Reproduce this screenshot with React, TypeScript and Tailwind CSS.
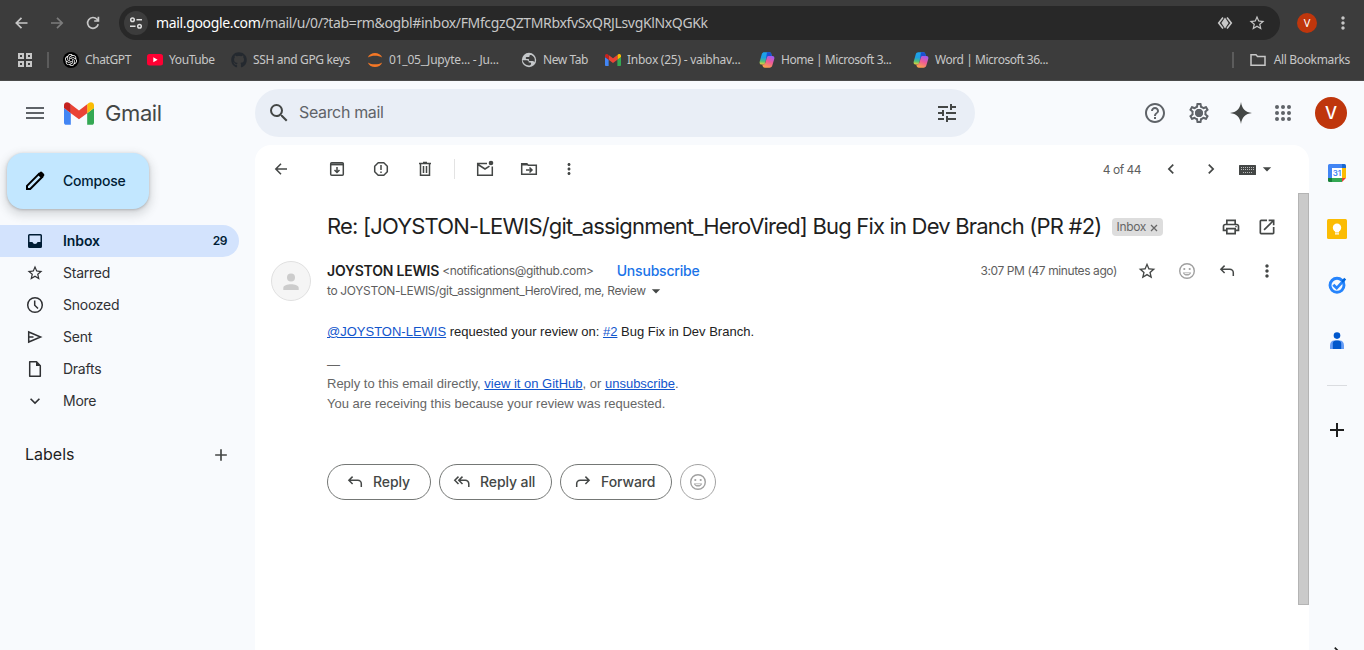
import React from "react";
import {
  MdAdd,
  MdArrowDropDown,
  MdChevronLeft,
  MdChevronRight,
  MdHelpOutline,
  MdKeyboardArrowDown,
  MdMenu,
  MdMoreVert,
  MdOpenInNew,
  MdOutlinePrint,
  MdOutlineSettings,
  MdSearch,
  MdStarBorder,
  MdTune,
} from "react-icons/md";
import { FaGithub } from "react-icons/fa";
import { SiOpenai } from "react-icons/si";

type SvgProps = { className?: string; children: React.ReactNode; box?: string };

function Stroke({ className = "", children, box = "0 0 20 20" }: SvgProps) {
  return (
    <svg
      viewBox={box}
      className={`shrink-0 ${className}`}
      fill="none"
      stroke="currentColor"
      strokeWidth="1.5"
    >
      {children}
    </svg>
  );
}

function GmailMark({ className = "" }: { className?: string }) {
  return (
    <svg viewBox="52 42 88 66" className={`shrink-0 ${className}`}>
      <path fill="#4285f4" d="M58 108h14V74L52 59v43c0 3.32 2.69 6 6 6" />
      <path fill="#34a853" d="M120 108h14c3.32 0 6-2.69 6-6V59l-20 15" />
      <path fill="#fbbc04" d="M120 48v26l20-15v-8c0-7.42-8.47-11.65-14.4-7.2" />
      <path fill="#ea4335" d="M72 74V48l24 18 24-18v26L96 92" />
      <path fill="#c5221f" d="M52 51v8l20 15V48l-5.6-4.2c-5.94-4.45-14.4-.22-14.4 7.2" />
    </svg>
  );
}

function CopilotMark({ id }: { id: string }) {
  return (
    <svg viewBox="-0.3 -0.3 16.600 16.600" className="size-4 shrink-0">
      <defs>
        <linearGradient id={`${id}a`} x1="0.5" y1="0" x2="0.4" y2="1">
          <stop offset="0" stopColor="#1ba4f0" />
          <stop offset="0.45" stopColor="#1f9ee0" />
          <stop offset="0.75" stopColor="#4fbf7a" />
          <stop offset="1" stopColor="#e3d03a" />
        </linearGradient>
        <linearGradient id={`${id}b`} x1="0.8" y1="0" x2="0.4" y2="1">
          <stop offset="0" stopColor="#9a5cf5" />
          <stop offset="0.5" stopColor="#ee5a97" />
          <stop offset="1" stopColor="#fba04e" />
        </linearGradient>
      </defs>
      <path
        fill={`url(#${id}a)`}
        d="M5.300 0h5.100c1 0 1.700.6 2 1.500L13 4H9.600c-.9 0-1.500.5-1.800 1.400L6 11.400c-.3.900-.9 1.300-1.800 1.300H2.400C.8 12.700 0 11.400.4 9.800L2.500 2.200C2.900.8 3.900 0 5.300 0z"
      />
      <path fill="#1d4fd0" d="M8 0h2.600c.9 0 1.500.6 1.800 1.500L13 4H9.600c-.9 0-1.500.5-1.800 1.400L6.500 9.500z" />
      <path
        fill={`url(#${id}b)`}
        d="M10.700 16H5.600c-1 0-1.700-.6-2-1.500L3 12.600h1.400c.9 0 1.500-.5 1.800-1.400L8 5.200c.3-.9.9-1.300 1.800-1.300h3.800c1.600 0 2.400 1.300 2 2.900l-2.100 7C13.100 15.200 12.100 16 10.700 16z"
      />
    </svg>
  );
}

function Smile({ className = "" }: { className?: string }) {
  return (
    <Stroke className={className}>
      <circle cx="10" cy="10" r="7.300" strokeWidth="1.400" />
      <circle cx="7.300" cy="8" r="1.100" fill="currentColor" stroke="none" />
      <circle cx="12.700" cy="8" r="1.100" fill="currentColor" stroke="none" />
      <path d="M5.800 11.500h8.400a4.400 4.400 0 0 1-8.400 0z" fill="currentColor" stroke="none" />
      <path d="M7.600 12.600h4.800" stroke="#fff" strokeWidth="0.900" />
    </Stroke>
  );
}

function ReplyArrow({ className = "" }: { className?: string }) {
  return (
    <Stroke className={className}>
      <path d="M7.600 4.600 3.900 8.300l3.700 3.700M4.200 8.300h8.600a3.500 3.500 0 0 1 3.500 3.500V15" />
    </Stroke>
  );
}

function Cell({ className = "", children }: { className?: string; children: React.ReactNode }) {
  return <div className={`flex shrink-0 items-center justify-center ${className}`}>{children}</div>;
}

function BrowserBar() {
  return (
    <header className="h-[81px] shrink-0 border-b border-[#4a4a4a] bg-[#3c3c3c] font-['Noto_Sans',sans-serif] text-[#c7c7c7]">
      <div className="flex h-[46px] items-center pl-1">
        <Cell className="w-[35px]">
          <Stroke className="size-4 text-[#c7c7c7]" box="0 0 16 16">
            <path d="M13.500 8H2.500M7.500 2.800 2.300 8l5.200 5.200" strokeWidth="1.700" />
          </Stroke>
        </Cell>
        <Cell className="w-[36px]">
          <Stroke className="size-4 text-[#7c7c7c]" box="0 0 16 16">
            <path d="M2 8h11M8 2.800 13.200 8 8 13.200" strokeWidth="1.700" />
          </Stroke>
        </Cell>
        <Cell className="w-[36px]">
          <Stroke className="size-4 text-[#c7c7c7]" box="0 0 16 16">
            <path d="M13.200 9.300A5.400 5.400 0 1 1 12 4.300L13.300 6M13.400 1.800V6H9.200" strokeWidth="1.700" />
          </Stroke>
        </Cell>
        <div className="ml-2 flex h-[34px] w-[1161px] items-center rounded-full bg-[#282828] pl-[5px] pr-[14px]">
          <Cell className="size-6 rounded-full bg-[#3c3c3c]">
            <Stroke className="size-4 text-[#dedede]" box="0 0 16 16">
              <circle cx="4.500" cy="4.800" r="1.800" />
              <path d="M8.500 4.800H14M2 11.200h5.500" />
              <circle cx="11.500" cy="11.200" r="1.800" />
            </Stroke>
          </Cell>
          <div className="ml-2 whitespace-nowrap text-sm leading-5 tracking-[-0.35px]">
            <span className="text-white">mail.google.com</span>
            <span>/mail/u/0/?tab=rm&amp;ogbl#inbox/FMfcgzQZTMRbxfvSxQRJLsvgKlNxQGKk</span>
          </div>
          <svg viewBox="0 0 16 16" className="ml-auto size-4">
            <path
              d="M6 2.500 1.700 8 6 13.500M10 2.500 14.300 8 10 13.500"
              fill="none"
              stroke="currentColor"
              strokeWidth="1.600"
            />
            <path d="M8 2.500 11.600 8 8 13.500 4.400 8z" fill="currentColor" />
          </svg>
          <MdStarBorder className="ml-[15px] size-[18px]" />
        </div>
        <Cell className="ml-[17px] size-5 rounded-full bg-[#bf360c] text-[11px] text-white">V</Cell>
        <MdMoreVert className="ml-4 size-5" />
      </div>
      <nav className="flex h-7 items-center whitespace-nowrap text-xs tracking-[-0.3px]">
        <Stroke className="ml-[17px] size-4 text-[#c7c7c7]" box="0 0 16 16">
          <path d="M2 2h4v4H2zM10 2h4v4h-4zM2 10h4v4H2zM10 10h4v4h-4z" strokeWidth="2" />
        </Stroke>
        <span className="ml-[14px] h-4 w-0.5 bg-[#5c5c5c]" />
        <span className="ml-[14px] flex w-[84px] items-center">
          <span className="flex size-4 shrink-0 items-center justify-center rounded-full bg-black">
            <SiOpenai className="size-3 text-white" />
          </span>
          <span className="ml-1.5 tracking-[-0.4px]">ChatGPT</span>
        </span>
        <span className="flex w-[84px] items-center">
          <svg viewBox="0 0 16 12" className="h-3 w-4 shrink-0">
            <rect width="16" height="11.500" rx="2.500" fill="#ff0033" />
            <path d="M6.300 3.300v5l4.300-2.500z" fill="#fff" />
          </svg>
          <span className="ml-1.5 tracking-[-0.4px]">YouTube</span>
        </span>
        <span className="flex w-[136px] items-center">
          <FaGithub className="size-4 shrink-0 text-[#24292f]" />
          <span className="ml-1.5 tracking-[-0.35px]">SSH and GPG keys</span>
        </span>
        <span className="flex w-[154px] items-center">
          <svg viewBox="0 0 16 16" className="size-4 shrink-0">
            <path d="M.8 5.600C3-.6 13-.6 15.200 5.600 11.500 3 4.500 3 .8 5.600z" fill="#f37726" />
            <path d="M.8 10.400C3 16.600 13 16.600 15.200 10.400 11.500 13 4.500 13 .8 10.400z" fill="#f37726" />
          </svg>
          <span className="ml-1.5 tracking-[-0.2px]">01_05_Jupyte... - Ju...</span>
        </span>
        <span className="flex w-[84px] items-center">
          <svg viewBox="0 0 16 16" className="size-4 shrink-0">
            <circle cx="8" cy="8" r="7.200" fill="#c4c7c9" />
            <path
              d="M1.500 8.300h4.300c1.300 0 1.900.8 1.900 1.800v.5h1.200c.8 0 1.200.5 1.200 1.200 0 .9-.6 1.400-1.700 1.600-3.500.2-6-2-6.900-5.100zM10.800 3.200c1.900 1 3 2.800 3 4.800 0 .8-.2 1.500-.5 2.200-.4-.8-.9-1.200-1.700-1.200H8.900c-.6 0-1-.4-1-1V7H5.600c-.5 0-.9-.4-.9-.9 0-.7.5-1.200 1.200-1.200h2.500V4.300c0-.8.600-1.300 1.400-1.300z"
              fill="#3c3c3c"
            />
          </svg>
          <span className="ml-1.5 tracking-[-0.45px]">New Tab</span>
        </span>
        <span className="flex w-[154px] items-center">
          <GmailMark className="h-3 w-4" />
          <span className="ml-1.5 tracking-[-0.25px]">Inbox (25) - vaibhav...</span>
        </span>
        <span className="flex w-[154px] items-center">
          <CopilotMark id="home" />
          <span className="ml-1.5 tracking-[-0.45px]">Home | Microsoft 3...</span>
        </span>
        <span className="flex items-center">
          <CopilotMark id="word" />
          <span className="ml-1.5 tracking-[-0.45px]">Word | Microsoft 36...</span>
        </span>
        <span className="ml-auto mr-4 h-4 w-0.5 bg-[#5c5c5c]" />
        <Stroke className="size-4" box="0 0 16 16">
          <path d="M1 13.200V2.800h5l1.500 1.700H15v8.700z" />
        </Stroke>
        <span className="ml-2 mr-[14px] tracking-[-0.35px]">All Bookmarks</span>
      </nav>
    </header>
  );
}

const folders: { name: string; icon: React.ReactNode; count?: string; active?: boolean }[] = [
  {
    name: "Inbox",
    icon: (
      <svg viewBox="0 0 20 20" className="size-5">
        <path
          fillRule="evenodd"
          fill="currentColor"
          d="M4.500 3h11A1.500 1.500 0 0 1 17 4.500v11a1.500 1.500 0 0 1-1.500 1.500h-11A1.500 1.500 0 0 1 3 15.500v-11A1.500 1.500 0 0 1 4.500 3zm0 1.500V11h3c.3 1.200 1.300 2 2.500 2s2.200-.8 2.500-2h3V4.500z"
        />
      </svg>
    ),
    count: "29",
    active: true,
  },
  { name: "Starred", icon: <MdStarBorder className="size-[18px]" /> },
  {
    name: "Snoozed",
    icon: (
      <Stroke className="size-5">
        <circle cx="10" cy="10" r="7.300" />
        <path d="M9.700 5.500v4.800l3.300 3.200" />
      </Stroke>
    ),
  },
  {
    name: "Sent",
    icon: (
      <Stroke className="size-5">
        <path d="M3.700 5v10L15.600 10zM4 10h4.500" />
      </Stroke>
    ),
  },
  {
    name: "Drafts",
    icon: (
      <Stroke className="size-5">
        <path d="M4.700 2.700h6.800l3.800 4v10.600H4.700z" strokeLinejoin="round" />
        <path d="M11 2.500v4.500h4.500z" fill="currentColor" stroke="none" />
      </Stroke>
    ),
  },
  { name: "More", icon: <MdKeyboardArrowDown className="size-5" /> },
];

function Sidebar() {
  return (
    <aside className="flex w-[255px] shrink-0 flex-col">
      <div className="flex h-16 items-center pl-[23px]">
        <MdMenu className="size-6 text-[#5f6368]" />
        <GmailMark className="ml-[17px] h-[23px] w-[30px]" />
        <span className="ml-[11px] text-[22px] tracking-[-0.4px] text-[#444746]">Gmail</span>
      </div>
      <button className="ml-[7px] mt-2 flex h-14 w-[142px] items-center rounded-2xl bg-[#c2e7ff] pl-4 text-[#001d35] shadow-[0_1px_3px_rgba(60,64,67,0.3),0_4px_8px_3px_rgba(60,64,67,0.15)]">
        <svg viewBox="0 0 24 24" className="size-6 text-black">
          <path
            d="M4 20v-3.200L16 4.800l3.200 3.200L7.200 20z"
            fill="none"
            stroke="currentColor"
            strokeWidth="2"
          />
          <path d="m14.500 5.500 2.300-2.300a1.800 1.800 0 0 1 2.500 0l1.500 1.500c.7.700.7 1.800 0 2.500l-2.300 2.300z" fill="currentColor" />
        </svg>
        <span className="ml-4 text-sm font-medium tracking-[-0.2px]">Compose</span>
      </button>
      <ul className="mt-4">
        {folders.map((f) => (
          <li
            key={f.name}
            className={`mr-4 flex h-8 items-center rounded-r-full pl-[25px] pr-3 text-sm ${
              f.active ? "bg-[#d3e3fd] font-semibold text-[#001d35]" : "text-[#303134]"
            }`}
          >
            <Cell className="size-5">{f.icon}</Cell>
            <span className={`ml-[18px] ${f.active ? "tracking-[-0.1px]" : "tracking-[-0.25px]"}`}>{f.name}</span>
            {f.count && <span className="ml-auto text-xs tracking-[-0.5px]">{f.count}</span>}
          </li>
        ))}
      </ul>
      <div className="mt-[27px] flex h-[22px] items-center justify-between pl-[25px] pr-6">
        <h2 className="pb-0.5 text-base text-[#1f1f1f]">Labels</h2>
        <MdAdd className="size-5 text-[#444746]" />
      </div>
    </aside>
  );
}

function TopBar() {
  return (
    <div className="flex h-16 shrink-0 items-center">
      <div className="flex h-12 w-[720px] items-center rounded-full bg-[#e9eef6] pl-3 pr-4">
        <MdSearch className="size-6 text-[#444746]" />
        <span className="ml-2 pb-0.5 text-base tracking-[-0.35px] text-[#5f6368]">Search mail</span>
        <MdTune className="ml-auto size-6 text-[#444746]" />
      </div>
      <MdHelpOutline className="ml-[168px] size-6 text-[#5f6368]" />
      <Cell className="ml-5 size-6 text-[#5f6368]">
        <svg viewBox="0 0 24 24" className="size-6">
          <circle cx="12" cy="12" r="3.900" fill="currentColor" />
          <foreignObject width="24" height="24">
            <MdOutlineSettings className="size-6" />
          </foreignObject>
        </svg>
      </Cell>
      <svg viewBox="0 0 24 24" className="ml-[18px] size-6 text-[#444746]">
        <path d="M12 1c.7 6.500 4.500 10.300 11 11-6.500.7-10.300 4.500-11 11-.7-6.500-4.500-10.300-11-11C7.500 11.300 11.300 7.500 12 1z" fill="currentColor" />
      </svg>
      <svg viewBox="0 0 24 24" className="ml-[18px] size-6 text-[#5f6368]" fill="currentColor">
        {[6, 12, 18].map((y) => [6, 12, 18].map((x) => <circle key={`${x}-${y}`} cx={x} cy={y} r="2" />))}
      </svg>
      <Cell className="ml-5 size-8 rounded-full bg-[#bf360c] pt-px text-[17px] font-medium text-white">V</Cell>
    </div>
  );
}

function MailToolbar() {
  return (
    <div className="flex h-12 items-center pl-1.5 text-[#444746]">
      <Cell className="w-10">
        <Stroke className="size-5">
          <path d="M16 10H5.300M10 4.700 4.800 10l5.200 5.300" />
        </Stroke>
      </Cell>
      <Cell className="ml-[14px] w-11">
        <Stroke className="size-5">
          <rect x="3.700" y="3.700" width="12.600" height="12.600" rx="1" />
          <path d="M3.500 5.400h13" strokeWidth="2" />
          <path d="M10 8v5.500M7.500 11l2.500 2.500 2.500-2.500" />
        </Stroke>
      </Cell>
      <Cell className="w-11">
        <Stroke className="size-5">
          <path d="M7.200 3.700h5.600l3.500 3.500v5.600l-3.500 3.500H7.200l-3.500-3.500V7.200z" strokeLinejoin="round" />
          <path d="M10 6v5M10 12.500V14" />
        </Stroke>
      </Cell>
      <Cell className="w-11">
        <Stroke className="size-5">
          <path d="M5.500 5v11.300h9V5M4 4.500h12M8 3.500h4M8.500 7v7M11.500 7v7" />
        </Stroke>
      </Cell>
      <span className="ml-[7px] h-5 w-px bg-[#e3e3e3]" />
      <Cell className="ml-2 w-11">
        <Stroke className="size-5">
          <path d="M12 4.500H2.700v11.800h14.600V7.500M3 5.500l7 4.500 4.500-2.800" />
          <circle cx="16" cy="4" r="2.300" fill="currentColor" stroke="none" />
        </Stroke>
      </Cell>
      <Cell className="w-11">
        <Stroke className="size-5">
          <path d="M2.700 15.300V4.700h5l1.600 1.600h8v9z" />
          <path d="M2.500 5.500h6" strokeWidth="2" />
          <path d="M7 11h5.500M10.500 8.500l2.500 2.500-2.500 2.500" />
        </Stroke>
      </Cell>
      <Cell className="w-9">
        <MdMoreVert className="size-[18px]" />
      </Cell>
      <span className="ml-auto pt-0.5 text-xs tracking-[-0.5px] text-[#5e5e5e]">4 of 44</span>
      <MdChevronLeft className="ml-5 size-5" />
      <MdChevronRight className="ml-5 size-5" />
      <svg viewBox="0 0 18 12" className="ml-[18px] mt-0.5 h-3 w-[18px] text-[#444746]">
        <rect width="17" height="10" y="1" rx="0.500" fill="currentColor" />
        <path d="M2 3.500h14M2 5.500h14M4 8.500h10" stroke="#b9b9b9" strokeWidth="1" strokeDasharray="1 1" />
      </svg>
      <MdArrowDropDown className="mr-8 size-5" />
    </div>
  );
}

const pill = "flex h-9 items-center rounded-full border border-[#747775] text-sm font-medium tracking-[-0.1px] text-[#444746]";

function Message() {
  return (
    <article className="min-w-0 flex-1">
      <div className="flex h-[68px] items-center pl-[72px]">
        <h1 className="whitespace-nowrap pb-px text-[22px] tracking-[-0.81px] text-[#1f1f1f]">
          Re: [JOYSTON-LEWIS/git_assignment_HeroVired] Bug Fix in Dev Branch (PR #2)
        </h1>
        <span className="ml-[11px] flex h-[18px] w-[51px] items-center rounded bg-[#ddd] pl-1 text-xs tracking-[-0.3px] text-[#666]">
          Inbox
          <svg viewBox="0 0 8 8" className="ml-1 mt-px size-2">
            <path d="m1 1 6 6M7 1 1 7" stroke="#666" strokeWidth="1.300" />
          </svg>
        </span>
        <MdOutlinePrint className="ml-auto size-5 text-[#444746]" />
        <MdOpenInNew className="ml-4 mr-[21px] size-5 text-[#444746]" />
      </div>
      <div className="flex h-10 pl-4">
        <svg viewBox="0 0 40 40" className="size-10 shrink-0">
          <circle cx="20" cy="20" r="19.500" fill="#f5f5f5" stroke="#e0e0e0" />
          <circle cx="20" cy="16.500" r="4" fill="#ccc" />
          <path d="M12.300 29v-2c0-5 15.400-5 15.400 0v2z" fill="#ccc" />
        </svg>
        <div className="ml-4 min-w-0 whitespace-nowrap">
          <div className="flex h-5 items-center">
            <span className="text-sm font-semibold tracking-[-0.2px] text-[#1f1f1f]">JOYSTON LEWIS</span>
            <span className="ml-[3px] text-xs tracking-[-0.36px] text-[#5e5e5e]">&lt;notifications@github.com&gt;</span>
            <span className="ml-[23px] text-sm font-medium tracking-[-0.2px] text-[#1a73e8]">Unsubscribe</span>
          </div>
          <div className="flex h-5 items-center text-xs tracking-[-0.35px] text-[#5e5e5e]">
            to JOYSTON-LEWIS/git_assignment_HeroVired, me, Review
            <MdArrowDropDown className="size-5 text-[#444746]" />
          </div>
        </div>
        <div className="ml-auto flex h-5 shrink-0 items-center pr-[21px] text-[#444746]">
          <span className="whitespace-nowrap text-xs tracking-[-0.4px] text-[#5e5e5e]">
            3:07 PM (47 minutes ago)
          </span>
          <MdStarBorder className="ml-5 size-5" />
          <Smile className="ml-5 size-5 text-[#a0a0a0]" />
          <ReplyArrow className="ml-5 size-5" />
          <MdMoreVert className="ml-5 size-5" />
        </div>
      </div>
      <div className="pl-[72px] font-['Liberation_Sans',Arial,sans-serif] text-[13px] leading-5 text-[#666]">
        <p className="mt-[21px] text-[#222]">
          <a className="text-[#1155cc] underline">@JOYSTON-LEWIS</a> requested your review on:{" "}
          <a className="text-[#1155cc] underline">#2</a> Bug Fix in Dev Branch.
        </p>
        <p className="mt-[13px]">—</p>
        <p className="-mt-px">
          Reply to this email directly, <a className="text-[#1155cc] underline">view it on GitHub</a>, or{" "}
          <a className="text-[#1155cc] underline">unsubscribe</a>.
        </p>
        <p>You are receiving this because your review was requested.</p>
      </div>
      <div className="mt-[50px] flex gap-2 pl-[72px]">
        <button className={`${pill} w-[104px] pl-[17px]`}>
          <ReplyArrow className="size-5" />
          <span className="ml-2">Reply</span>
        </button>
        <button className={`${pill} w-[113px] pl-3`}>
          <Stroke className="size-5">
            <path d="M6.500 4.600 2.800 8.300l3.700 3.700M10.500 4.600 6.800 8.300l3.700 3.700M7.100 8.300h6.200a3.500 3.500 0 0 1 3.500 3.500V15" />
          </Stroke>
          <span className="ml-2">Reply all</span>
        </button>
        <button className={`${pill} w-[112px] pl-3`}>
          <ReplyArrow className="size-5 -scale-x-100" />
          <span className="ml-2">Forward</span>
        </button>
        <span className="flex size-9 items-center justify-center rounded-full border border-[#a3a3a3]">
          <Smile className="size-5 text-[#a0a0a0]" />
        </span>
      </div>
    </article>
  );
}

function AddOns() {
  return (
    <aside className="flex w-[55px] shrink-0 flex-col items-center overflow-hidden pt-[18px]">
      <svg viewBox="0 0 20 20" className="size-5 shrink-0">
        <path d="M1 2.500A1.500 1.500 0 0 1 2.500 1H15v4H5v10H1z" fill="#4285f4" />
        <path d="M15 1h2.500A1.500 1.500 0 0 1 19 2.500V5h-4z" fill="#1967d2" />
        <path d="M15 5h4v10h-4z" fill="#fbbc04" />
        <path d="M5 15h10v4H5z" fill="#34a853" />
        <path d="M1 15h4v4H2.500A1.500 1.500 0 0 1 1 17.500z" fill="#188038" />
        <path d="M15 15h4l-4 4z" fill="#ea4335" />
        <path d="M5 5h10v10H5z" fill="#fff" />
        <text
          x="10"
          y="13"
          textAnchor="middle"
          fontSize="8"
          fontWeight="600"
          fill="#4285f4"
        >
          31
        </text>
      </svg>
      <svg viewBox="0 0 20 20" className="mt-9 size-5 shrink-0">
        <rect width="20" height="20" rx="1.500" fill="#fbbc04" />
        <circle cx="10" cy="8.800" r="4.200" fill="#fff" />
        <path d="M8 11.500h4v2H8zM8 14.300h4v1.200H8z" fill="#fff" />
      </svg>
      <svg viewBox="0 0 20 20" className="mt-9 size-5 shrink-0">
        <circle cx="10" cy="10.300" r="7" fill="none" stroke="#2684fc" strokeWidth="2.900" />
        <path d="m6.300 9.700 3.400 3.400 7.600-8.200" fill="none" stroke="#2684fc" strokeWidth="2.800" />
        <path d="m14.500 6 2.700-3.300 2 1.800-3.400 3.600z" fill="#0066da" />
      </svg>
      <svg viewBox="0 0 20 20" className="mt-9 size-5 shrink-0">
        <circle cx="10" cy="4.600" r="3.300" fill="#0057cc" />
        <path d="M3 18v-3.500C3 11.300 5 9.500 7 9.500h6c2 0 4 1.800 4 5V18z" fill="#669df6" />
        <path d="M5.800 18v-5.500c0-2 1.400-3 3.200-3h2c1.800 0 3.200 1 3.200 3V18z" fill="#0057cc" />
      </svg>
      <span className="mt-[34px] h-px w-5 shrink-0 bg-[#dadce0]" />
      <svg viewBox="0 0 14 14" className="mt-[37px] size-3.5 shrink-0">
        <path d="M7 0v14M0 7h14" stroke="#1f1f1f" strokeWidth="2" />
      </svg>
      <MdChevronRight className="mb-[-12px] mt-auto size-5 shrink-0 text-[#1f1f1f]" />
    </aside>
  );
}

export default function App() {
  return (
    <div className="flex h-[650px] w-[1364px] flex-col overflow-hidden bg-[#f8fafd] font-['Inter',sans-serif]">
      <BrowserBar />
      <div className="flex min-h-0 flex-1">
        <Sidebar />
        <div className="flex min-w-0 flex-1 flex-col">
          <TopBar />
          <div className="flex min-h-0 flex-1">
            <main className="flex min-w-0 flex-1 flex-col rounded-t-2xl bg-white">
              <MailToolbar />
              <div className="flex min-h-0 flex-1">
                <Message />
                <div className="h-[412px] w-[11px] shrink-0 border border-[#b4b4b4] bg-[#cacaca]" />
              </div>
            </main>
            <AddOns />
          </div>
        </div>
      </div>
    </div>
  );
}
